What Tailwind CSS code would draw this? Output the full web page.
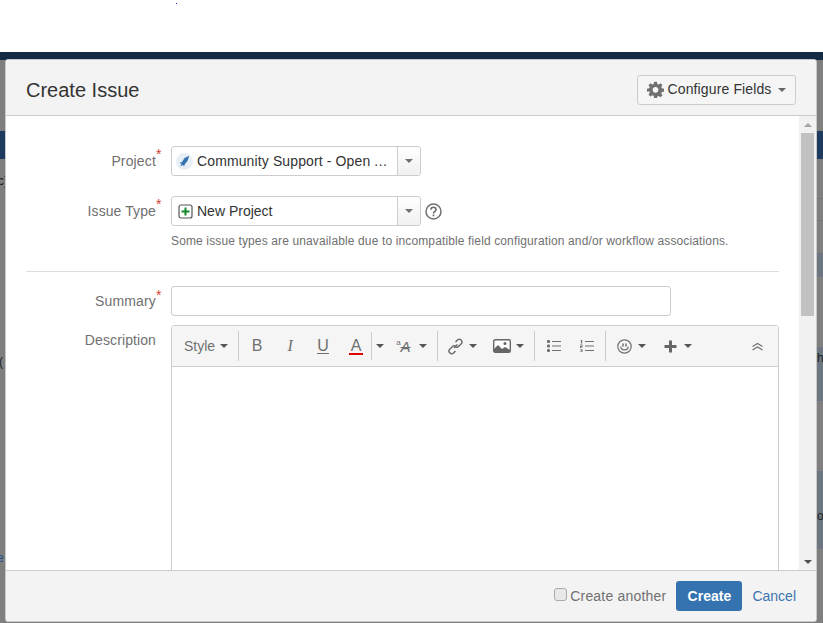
<!DOCTYPE html>
<html lang="en">
<head>
  <meta charset="UTF-8" />
  <title>Create Issue</title>
  <script src="https://cdn.jsdelivr.net/npm/@tailwindcss/browser@4"></script>
</head>
<body class="relative w-[823px] h-[623px] overflow-hidden bg-white font-['Liberation_Sans',Arial,sans-serif] text-[14px] text-[#333]">
  <!-- page behind the dialog -->
  <div class="h-[52px] bg-white relative">
    <div class="absolute left-[176px] top-[3px] w-[1px] h-[1px] bg-[#2020e0]"></div>
  </div>
  <div class="h-[8px] bg-[#132a45]"></div>
  <div class="h-[563px] bg-[#7f7f7f] flex justify-between overflow-hidden">
    <div class="w-[5px] flex flex-col text-[12px] leading-4 text-[#222] overflow-hidden">
      <div class="h-[71px] shrink-0"></div>
      <div class="h-[28px] shrink-0 bg-[#1d3b5e]"></div>
      <div class="h-[14px] shrink-0"></div>
      <div class="shrink-0 -ml-[2px]">c)</div>
      <div class="h-[165px] shrink-0"></div>
      <div class="shrink-0 -ml-[1px]">(</div>
      <div class="h-[180px] shrink-0"></div>
      <div class="shrink-0 -ml-[3px] text-[#1d4f8f]">e</div>
    </div>
    <div class="w-[6px] flex flex-col text-[12px] leading-4 text-[#222] overflow-hidden">
      <div class="h-[71px] shrink-0"></div>
      <div class="h-[28px] shrink-0 bg-[#1d3b5e]"></div>
      <div class="h-[40px] shrink-0 border-b border-[#757575]"></div>
      <div class="h-[22px] shrink-0 border-b border-[#757575]"></div>
      <div class="h-[32px] shrink-0"></div>
      <div class="h-[24px] shrink-0 bg-[#6c7680]"></div>
      <div class="h-[70px] shrink-0"></div>
      <div class="h-[54px] shrink-0 bg-[#6c7680] pt-[3px]">h</div>
      <div class="h-[70px] shrink-0"></div>
      <div class="h-[78px] shrink-0 bg-[#6c7680] pt-[37px]">o</div>
    </div>
  </div>

  <!-- dialog -->
  <div class="absolute left-[5px] top-[59px] w-[812px] h-[563px] flex flex-col bg-white border border-[#c8c8c8] rounded-[3px] overflow-hidden">
    <header class="h-[56px] shrink-0 flex items-center justify-between pl-[20px] pr-[20px] pt-[4px] bg-[#f3f3f3] border-b border-[#ccc]">
      <h2 class="text-[20px] text-[#333]">Create Issue</h2>
      <button class="h-[30px] w-[159px] flex items-center justify-center gap-[3px] bg-[#f5f5f5] border border-[#ccc] rounded-[3px] text-[#333] tracking-[0.13px]">
        <svg class="w-[17px] h-[17px]" viewBox="0 0 24 24" fill="#707070"><path fill-rule="evenodd" d="M10 1h4l.6 3.100 1.900.8 2.600-1.800 2.800 2.800-1.800 2.600.8 1.900L24 11v4l-3.100.6-.8 1.900 1.800 2.600-2.800 2.800-2.600-1.800-1.900.8L14 24h-4l-.6-3.100-1.900-.8-2.600 1.800-2.800-2.800 1.800-2.600-.8-1.900L0 15v-4l3.100-.6.8-1.900L2.100 5.900l2.800-2.800 2.600 1.800 1.900-.8zM12 8.500a4 4 0 1 0 0 8 4 4 0 0 0 0-8z"/></svg>
        <span>Configure Fields</span>
        <span class="ml-[3px] w-0 h-0 border-x-[4px] border-x-transparent border-t-[4px] border-t-[#666]"></span>
      </button>
    </header>

    <div class="flex-1 flex min-h-0">
      <div class="flex-1 overflow-hidden pl-[20px] pr-[20px] pt-[30px]">
        <div class="flex items-center h-[30px]">
          <label class="w-[130px] text-right text-[#707070] relative tracking-[0.15px]">Project<sup class="absolute text-[#d04437] text-[14px] top-[3px]">*</sup></label>
          <div class="ml-[15px] w-[250px] h-[30px] flex border border-[#ccc] rounded-[3px]">
            <div class="flex-1 flex items-center gap-[4px] pl-[4px]">
              <svg class="w-[17px] h-[17px]" viewBox="0 0 16 16"><circle cx="8" cy="8" r="8" fill="#e9eff6"/><path d="M12.500 2.500 8 4.800 5.800 8.200 3.200 9.500 5.300 10 4 13 6.600 11 7.500 12.800 8.600 10 10.800 7.500z" fill="#3572b0"/></svg>
              <span class="whitespace-nowrap tracking-[0.12px]">Community Support - Open <span class="tracking-[0.5px]">...</span></span>
            </div>
            <div class="w-[23px] flex items-center justify-center border-l border-[#ccc] bg-gradient-to-b from-white to-[#f0f0f0] rounded-r-[3px]"><span class="w-0 h-0 border-x-[4px] border-x-transparent border-t-[4px] border-t-[#707070]"></span></div>
          </div>
        </div>
        <div class="flex items-center h-[30px] mt-[20px]">
          <label class="w-[130px] text-right text-[#707070] relative tracking-[0.1px]">Issue Type<sup class="absolute text-[#d04437] text-[14px] top-[3px]">*</sup></label>
          <div class="ml-[15px] w-[250px] h-[30px] flex border border-[#ccc] rounded-[3px]">
            <div class="flex-1 flex items-center gap-[4px] pl-[6px]">
              <svg class="w-[15px] h-[15px]" viewBox="0 0 15 15"><rect x="1" y="1" width="13" height="13" rx="2" fill="#fff" stroke="#555" stroke-width="1.200"/><path d="M7.500 3.500v8M3.500 7.500h8" stroke="#14892c" stroke-width="2"/></svg>
              <span>New Project</span>
            </div>
            <div class="w-[23px] flex items-center justify-center border-l border-[#ccc] bg-gradient-to-b from-white to-[#f0f0f0] rounded-r-[3px]"><span class="w-0 h-0 border-x-[4px] border-x-transparent border-t-[4px] border-t-[#707070]"></span></div>
          </div>
          <svg class="ml-[4px] w-[17px] h-[17px]" viewBox="0 0 17 17" fill="none"><circle cx="8.500" cy="8.500" r="7.500" stroke="#707070" stroke-width="1.500"/><path d="M6 6.700c0-3.200 5-3.200 5 0 0 1.900-2.500 1.700-2.500 3.700" stroke="#707070" stroke-width="1.600"/><rect x="7.600" y="11.500" width="1.800" height="1.800" fill="#707070"/></svg>
        </div>
        <p class="ml-[145px] mt-[7px] text-[12px] leading-[16px] text-[#707070] whitespace-nowrap tracking-[0.13px]">Some issue types are unavailable due to incompatible field configuration and/or workflow associations.</p>
        <div class="mt-[22px] h-[1px] bg-[#ddd]"></div>
        <div class="flex items-center h-[30px] mt-[14px]">
          <label class="w-[130px] text-right text-[#707070] relative tracking-[0.14px]">Summary<sup class="absolute text-[#d04437] text-[14px] top-[4px]">*</sup></label>
          <div class="ml-[15px] w-[500px] h-[30px] bg-white border border-[#ccc] rounded-[3px]"></div>
        </div>
        <div class="flex mt-[9px]">
          <label class="w-[130px] text-right text-[#707070] pt-[5px] shrink-0 tracking-[0.1px]">Description</label>
          <div class="ml-[15px] flex-1 h-[400px] border border-[#ccc] rounded-t-[3px]">
            <div class="h-[41px] flex items-center bg-[#f5f5f5] border-b border-[#ccc] text-[#707070]">
              <span class="ml-[12px]">Style</span>
              <span class="ml-[5px] w-0 h-0 border-x-[4px] border-x-transparent border-t-[4px] border-t-[#555]"></span>
              <span class="ml-[10px] w-[1px] h-[30px] bg-[#ccc]"></span>
              <span class="ml-[12px] w-[12px] text-center text-[16px]">B</span>
              <span class="ml-[21px] w-[12px] text-center text-[16px] italic font-['Liberation_Serif',serif]">I</span>
              <span class="ml-[21px] w-[12px] text-center text-[16px] leading-[15px] border-b border-[#707070]">U</span>
              <span class="ml-[20px] w-[14px] text-center text-[16px] leading-[15px] border-b-2 border-[#e00000]">A</span>
              <span class="ml-[8px] w-[1px] h-[28px] bg-[#ccc]"></span>
              <span class="ml-[4px] w-0 h-0 border-x-[4px] border-x-transparent border-t-[4px] border-t-[#555]"></span>
              <span class="ml-[12px] flex items-start w-[21px] leading-none"><span class="text-[8px]">a</span><span class="text-[15px] italic line-through">A</span></span>
              <span class="ml-[2px] w-0 h-0 border-x-[4px] border-x-transparent border-t-[4px] border-t-[#555]"></span>
              <span class="ml-[10px] w-[1px] h-[30px] bg-[#ccc]"></span>
              <svg class="ml-[9px] w-[17px] h-[17px]" viewBox="0 0 17 17" fill="none" stroke="#666" stroke-width="1.400"><path d="M7 10l3.500-3.500M8.500 4l2-2c1-1 2.500-1 3.500 0s1.500 2.500.5 3.500l-3 3c-1 1-2.500 1-3.500 0M8.500 13l-2 2c-1 1-2.500 1-3.500 0s-1.500-2.500-.5-3.500l3-3c1-1 2.500-1 3.500 0"/></svg>
              <span class="ml-[5px] w-0 h-0 border-x-[4px] border-x-transparent border-t-[4px] border-t-[#555]"></span>
              <svg class="ml-[16px] w-[18px] h-[14px]" viewBox="0 0 18 14"><rect x=".7" y=".7" width="16.600" height="12.600" rx="1.500" fill="#fff" stroke="#666" stroke-width="1.400"/><path d="M1 13V10l4-4 4 4 3-2 5 3v2z" fill="#666"/><circle cx="12" cy="4.500" r="1.500" fill="#666"/></svg>
              <span class="ml-[5px] w-0 h-0 border-x-[4px] border-x-transparent border-t-[4px] border-t-[#555]"></span>
              <span class="ml-[10px] w-[1px] h-[30px] bg-[#ccc]"></span>
              <svg class="ml-[12px] w-[14px] h-[12px]" viewBox="0 0 14 12" fill="#707070"><rect x="0" y="0" width="3" height="3" rx="1"/><rect x="0" y="4.500" width="3" height="3" rx="1"/><rect x="0" y="9" width="3" height="3" rx="1"/><path d="M5 1h9v1H5zM5 5.500h9v1H5zM5 10h9v1H5z"/></svg>
              <svg class="ml-[19px] w-[14px] h-[12px]" viewBox="0 0 14 12" fill="#707070"><path d="M.8 0h1.400v3.500H1V1H.5zM0 4.500h2.500v2.200H1v.8h1.500v.6H0V6h1.500v-.8H0zM0 9h2.500v3H0v-.6h1.500v-.6H.6v-.6h.9v-.6H0z"/><path d="M5 1h9v1H5zM5 5.500h9v1H5zM5 10h9v1H5z"/></svg>
              <span class="ml-[11px] w-[1px] h-[30px] bg-[#ccc]"></span>
              <svg class="ml-[11px] w-[15px] h-[15px]" viewBox="0 0 15 15" fill="none" stroke="#707070" stroke-width="1.200"><circle cx="7.500" cy="7.500" r="6.700"/><path d="M6 4.500v3M9 4.500v3" stroke-width="1.500"/><path d="M3.800 7.500c0 4.500 7.400 4.500 7.400 0"/></svg>
              <span class="ml-[6px] w-0 h-0 border-x-[4px] border-x-transparent border-t-[4px] border-t-[#555]"></span>
              <svg class="ml-[18px] w-[13px] h-[13px]" viewBox="0 0 13 13" fill="#666"><path d="M5 .5h3v4.500h4.500v3H8v4.500H5V8H.5V5H5z"/></svg>
              <span class="ml-[7px] w-0 h-0 border-x-[4px] border-x-transparent border-t-[4px] border-t-[#555]"></span>
              <svg class="ml-auto mr-[15px] w-[11px] h-[9px]" viewBox="0 0 11 9" fill="none" stroke="#707070" stroke-width="1.200"><path d="M.5 4.500 5.500 1.500l5 3M.5 8 5.500 5l5 3"/></svg>
            </div>
          </div>
        </div>
      </div>
      <!-- scrollbar -->
      <div class="w-[17px] shrink-0 flex flex-col bg-[#f1f1f1]">
        <div class="h-[17px] flex items-center justify-center"><span class="w-0 h-0 border-x-[4px] border-x-transparent border-b-[4px] border-b-[#a3a3a3]"></span></div>
        <div class="h-[183px] ml-[2px] mr-[2px] bg-[#c1c1c1]"></div>
        <div class="flex-1"></div>
        <div class="h-[17px] flex items-center justify-center"><span class="w-0 h-0 border-x-[4px] border-x-transparent border-t-[4px] border-t-[#505050]"></span></div>
      </div>
    </div>

    <footer class="h-[51px] shrink-0 flex items-center justify-end pr-[20px] bg-[#f3f3f3] border-t border-[#ccc]">
      <span class="w-[13px] h-[13px] mb-[3px] bg-[#e8e8e8] border border-[#aaa] rounded-[3px]"></span>
      <span class="ml-[3px] text-[#707070] tracking-[0.2px]">Create another</span>
      <button class="ml-[10px] w-[66px] h-[30px] bg-[#3572b0] rounded-[3px] text-white font-bold">Create</button>
      <a class="ml-[10px] text-[#3b73af]">Cancel</a>
    </footer>
  </div>
</body>
</html>
